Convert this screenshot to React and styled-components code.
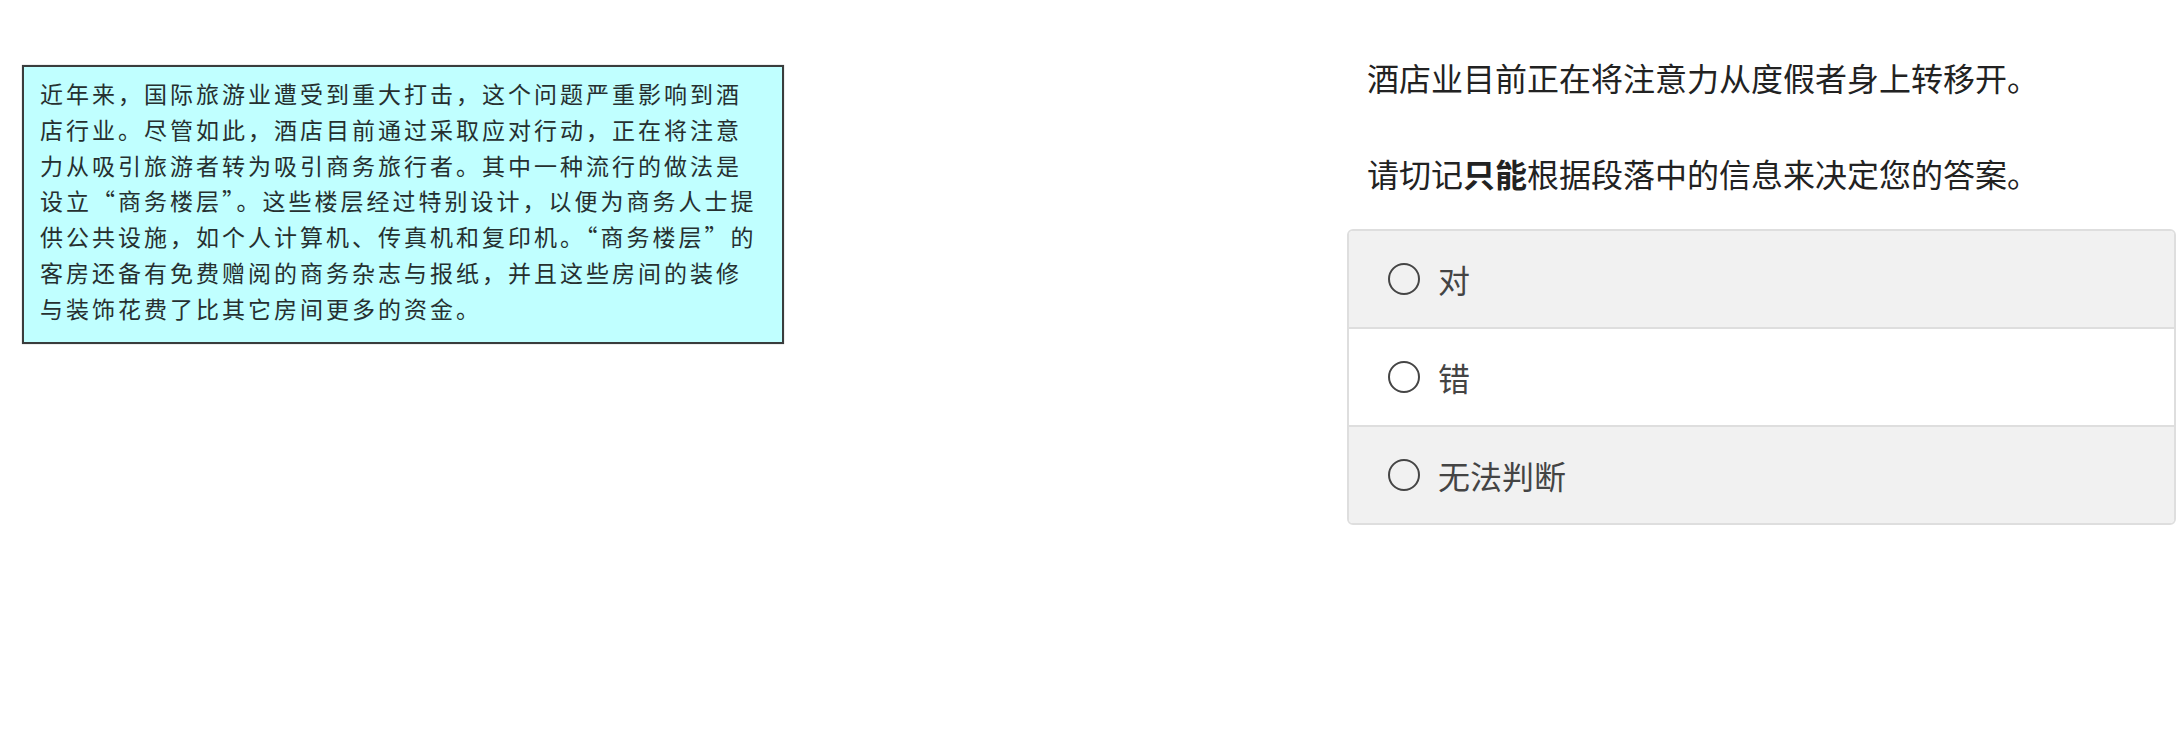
import React, { useState } from "react";
import styled, { createGlobalStyle } from "styled-components";

const GlobalStyle = createGlobalStyle`
  html, body {
    margin: 0;
    padding: 0;
    background: #ffffff;
  }
  body {
    font-family: "Noto Sans CJK SC", "Noto Sans", sans-serif;
  }
`;

const Page = styled.div`
  display: flex;
  justify-content: space-between;
  align-items: flex-start;
  width: 2177px;
  min-height: 737px;
`;

const Left = styled.div`
  padding: 65px 0 0 22px;
`;

const Passage = styled.div`
  box-sizing: border-box;
  width: 762px;
  height: 279px;
  padding: 9px 0 0 16px;
  background: #c0ffff;
  border: 2px solid #3a3d3d;
  box-shadow: 0 0 1px rgba(0, 0, 0, 0.4);
  font-family: "Noto Sans CJK SC", sans-serif;
  font-size: 23px;
  line-height: 35.8px;
  letter-spacing: 3px;
  color: #263030;
  white-space: nowrap;
`;

const Line = styled.div``;

const Right = styled.div`
  box-sizing: border-box;
  width: 829px;
  margin-right: 1px;
  padding-top: 55px;
`;

const Prompt = styled.p`
  margin: 0 0 52px;
  padding-left: 20px;
  font-size: 32px;
  line-height: 44px;
  color: #222;

  &:last-of-type {
    margin-bottom: 34px;
  }

  strong {
    font-weight: 700;
  }
`;

const Options = styled.div`
  border: 2px solid #dedede;
  border-radius: 6px;
  overflow: hidden;
`;

const Option = styled.label`
  display: flex;
  align-items: center;
  height: 96px;
  padding-left: 39px;
  background: ${(p) => (p.$striped ? "#f1f1f1" : "#ffffff")};
  border-top: ${(p) => (p.$first ? "none" : "2px solid #dedede")};
  cursor: pointer;
`;

const Radio = styled.span`
  box-sizing: border-box;
  width: 32px;
  height: 32px;
  border-radius: 50%;
  border: 2px solid #454545;
  margin-right: 18px;
  display: flex;
  align-items: center;
  justify-content: center;

  &::after {
    content: "";
    width: 16px;
    height: 16px;
    border-radius: 50%;
    background: ${(p) => (p.$checked ? "#454545" : "transparent")};
  }
`;

const OptionText = styled.span`
  font-size: 32px;
  color: #444;
`;

const lines = [
  "近年来，国际旅游业遭受到重大打击，这个问题严重影响到酒",
  "店行业。尽管如此，酒店目前通过采取应对行动，正在将注意",
  "力从吸引旅游者转为吸引商务旅行者。其中一种流行的做法是",
  "设立“商务楼层”。这些楼层经过特别设计，以便为商务人士提",
  "供公共设施，如个人计算机、传真机和复印机。“商务楼层”的",
  "客房还备有免费赠阅的商务杂志与报纸，并且这些房间的装修",
  "与装饰花费了比其它房间更多的资金。",
];

const choices = ["对", "错", "无法判断"];

export default function App() {
  const [picked, setPicked] = useState(null);

  return (
    <>
      <GlobalStyle />
      <Page>
        <Left>
          <Passage>
            {lines.map((l, i) => (
              <Line key={i}>{l}</Line>
            ))}
          </Passage>
        </Left>
        <Right>
          <Prompt>酒店业目前正在将注意力从度假者身上转移开。</Prompt>
          <Prompt>
            请切记<strong>只能</strong>根据段落中的信息来决定您的答案。
          </Prompt>
          <Options>
            {choices.map((c, i) => (
              <Option
                key={c}
                $first={i === 0}
                $striped={i % 2 === 0}
                onClick={() => setPicked(i)}
              >
                <Radio $checked={picked === i} />
                <OptionText>{c}</OptionText>
              </Option>
            ))}
          </Options>
        </Right>
      </Page>
    </>
  );
}
